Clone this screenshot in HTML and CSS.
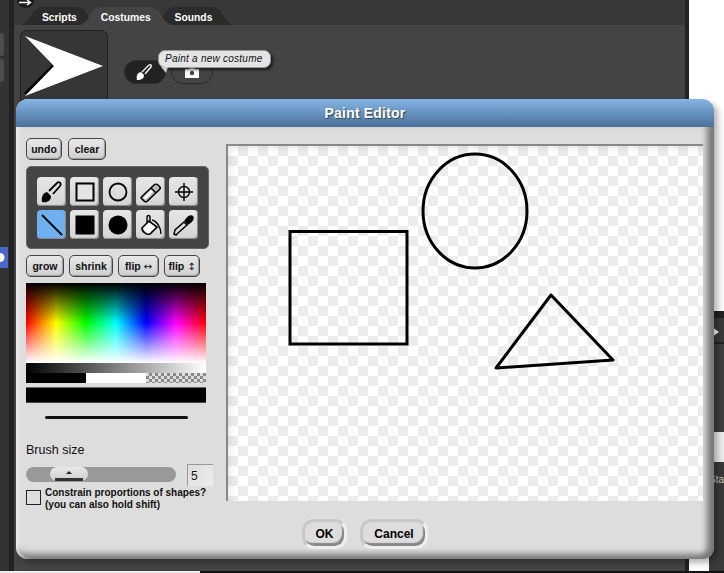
FILE: index.html
```html
<!DOCTYPE html>
<html>
  <head>
    <meta charset="UTF-8" />
    <title>Paint Editor</title>
    <link rel="stylesheet" href="styles.css">
  </head>
  <body>
    <div class="app">
      <div class="sidebar">
        <span class="side-btn"></span>
        <span class="side-btn"></span>
        <span class="side-blue"></span>
      </div>
      <div class="gutter"></div>
      <div class="main">
        <span class="top-arrow">
          <svg width="17" height="8" viewBox="0 0 17 8"><path d="M0 0h17c0 5-4 8-8 8s-9-3-9-8Z" fill="#1c1c1c"/><path d="M2 2.500h11M10 0l3.500 2.500L10 5" fill="none" stroke="#fff" stroke-width="1.3"/></svg>
        </span>
        <div class="tabs">
          <span class="tab">Scripts</span>
          <span class="tab tab-on">Costumes</span>
          <span class="tab">Sounds</span>
        </div>
        <div class="costumes">
          <div class="thumb">
            <svg width="87" height="72" viewBox="0 0 87 72">
              <path d="M32 35 4 63" stroke="#000" stroke-width="3"/>
              <path d="M4 5 82 35 4 65 33 35Z" fill="#fff"/>
            </svg>
          </div>
          <div class="pills">
            <span class="pill pill-on">
              <svg width="18" height="18" viewBox="0 0 18 18"><path d="M1 17c-1-4 0-7 4-8l3 3c0 4-3 5-7 5Z" fill="#fff"/><path d="M6 9 13 2c1.500-1 3 .5 2 2l-6 7" fill="none" stroke="#fff" stroke-width="1.300"/></svg>
            </span>
            <span class="pill">
              <svg width="14" height="12" viewBox="0 0 14 12"><path d="M0 3h4l1-2h4l1 2h4v9H0Z" fill="#fff"/><circle cx="7" cy="7" r="2.200" fill="#444"/></svg>
            </span>
          </div>
        </div>
      </div>
      <div class="edge"></div>
      <div class="far">
        <div class="far-blank"></div>
        <div class="far-sprite">
          <svg width="10" height="15" viewBox="0 0 10 15"><path d="M0 0 10 7 0 14 4 7Z" fill="#fff"/></svg>
        </div>
        <div class="far-light"></div>
        <div class="far-status">Sta</div>
      </div>
    </div>
    <div class="foot"></div>

    <div class="tooltip">Paint a new costume</div>

    <div class="dialog">
      <div class="dialog-title">Paint Editor</div>
      <div class="dialog-body">
        <div class="tools-col">
          <div class="btn-row">
            <button class="btn btn-undo">undo</button>
            <button class="btn btn-clear">clear</button>
          </div>
          <div class="toolbox">
            <span class="tool">
              <svg width="24" height="24" viewBox="0 0 24 24"><path d="M2 22c-1-5 1-9 5-10l4 4c0 5-4 7-9 6Z" fill="#000"/><path d="M9 11 17 3c2-2 5 0 3 3l-7 8" fill="#ddd" stroke="#000" stroke-width="1.800"/></svg>
            </span>
            <span class="tool">
              <svg width="24" height="24" viewBox="0 0 24 24"><rect x="3.500" y="3.500" width="17" height="17" fill="#e4e4e4" stroke="#000" stroke-width="2"/></svg>
            </span>
            <span class="tool">
              <svg width="24" height="24" viewBox="0 0 24 24"><circle cx="12" cy="12" r="8.500" fill="none" stroke="#000" stroke-width="1.800"/></svg>
            </span>
            <span class="tool">
              <svg width="24" height="24" viewBox="0 0 24 24"><path d="M2.500 17 15 5c1-1 3-1 4 0l1.500 1.500c1 1 1 2 0 3L8.500 21c-1 1-2.500 1-3.500 0l-2.500-2.500c-.5-.5-.5-1 0-1.500Z" fill="#bbb" stroke="#000" stroke-width="1.600"/><path d="M4.500 17.500 12.500 9.500l2 2-8 8Z" fill="#fff"/><path d="M12 8l5 5" stroke="#000" stroke-width="1.600"/></svg>
            </span>
            <span class="tool">
              <svg width="24" height="24" viewBox="0 0 24 24"><circle cx="12" cy="12" r="5.500" fill="none" stroke="#000" stroke-width="1.400"/><path d="M12 3v18M3 12h18" stroke="#000" stroke-width="1.400"/></svg>
            </span>
            <span class="tool tool-on">
              <svg width="24" height="24" viewBox="0 0 24 24"><path d="M2 2 22 22" stroke="#000" stroke-width="1.800"/></svg>
            </span>
            <span class="tool">
              <svg width="24" height="24" viewBox="0 0 24 24"><rect x="2.500" y="2.500" width="19" height="19" fill="#000"/></svg>
            </span>
            <span class="tool">
              <svg width="24" height="24" viewBox="0 0 24 24"><circle cx="12" cy="12" r="9.500" fill="#000"/></svg>
            </span>
            <span class="tool">
              <svg width="24" height="24" viewBox="0 0 24 24"><path d="M10 8 3 15c0 4 5 7 8 6l7-7Z" fill="#fff" stroke="#000" stroke-width="1.700"/><path d="M8 10V4c0-2 3-2 3 0v6" fill="none" stroke="#000" stroke-width="1.400"/><path d="M13 7c5 1 9 8 9 14" fill="none" stroke="#000" stroke-width="1.400"/></svg>
            </span>
            <span class="tool">
              <svg width="24" height="24" viewBox="0 0 24 24"><path d="M4 22 2 21l1-4L12 9l3 3-9 8Z" fill="#ddd" stroke="#000" stroke-width="1.500"/><path d="M13 7c2-4 6-6 8-4s0 6-4 8l-1 1-4-4Z" fill="#000"/></svg>
            </span>
          </div>
          <div class="btn-row btn-row-flips">
            <button class="btn btn-grow">grow</button>
            <button class="btn btn-shrink">shrink</button>
            <button class="btn btn-fliph">flip <span class="arrow">↔</span></button>
            <button class="btn btn-flipv">flip <span class="arrow">↕</span></button>
          </div>
          <div class="picker"></div>
          <div class="grays"></div>
          <div class="bw">
            <span class="bw-black"></span>
            <span class="bw-white"></span>
            <span class="bw-clear"></span>
          </div>
          <div class="swatch"></div>
          <div class="preview"><span class="preview-line"></span></div>
          <div class="brush-label">Brush size</div>
          <div class="brush-row">
            <div class="slider"><span class="thumb-knob"></span></div>
            <div class="size-box">5</div>
          </div>
          <div class="constrain">
            <span class="check"></span>
            <span class="constrain-text">Constrain proportions of shapes?<br>(you can also hold shift)</span>
          </div>
        </div>
        <div class="canvas">
          <svg width="475" height="355" viewBox="228 146 475 355">
            <rect x="290" y="231.500" width="117" height="112.500" fill="none" stroke="#000" stroke-width="3"/>
            <ellipse cx="475" cy="211" rx="52" ry="57" fill="none" stroke="#000" stroke-width="3"/>
            <path d="M551 295 613 360 496 368Z" fill="none" stroke="#000" stroke-width="3" stroke-linejoin="round"/>
          </svg>
        </div>
      </div>
      <div class="dialog-foot">
        <button class="round-btn round-ok">OK</button>
        <button class="round-btn round-cancel">Cancel</button>
      </div>
    </div>
  </body>
</html>
```

FILE: styles.css
```css
* {
  box-sizing: border-box;
}
html,
body {
  margin: 0;
  height: 573px;
  overflow: hidden;
  background: #fff;
  font-family: "Liberation Sans", Arial, sans-serif;
}
.app {
  display: flex;
  height: 571px;
}
.sidebar {
  width: 9px;
  background: #333;
  display: flex;
  flex-direction: column;
  padding-top: 33px;
  gap: 3px;
}
.side-btn {
  width: 4px;
  height: 23px;
  background: #4d4d4d;
  border-radius: 0 3px 3px 0;
}
.side-blue {
  width: 8px;
  height: 21px;
  margin-top: 162px;
  background: radial-gradient(circle at 0 50%, #fff 0 4px, #4a68cc 5px);
}
.gutter {
  width: 5px;
  background: #222;
}
.main {
  width: 676px;
  background: #444;
}
.top-arrow {
  display: block;
  width: 17px;
  height: 0;
  margin-left: 3px;
}
.top-arrow svg {
  display: block;
}
.tabs {
  display: flex;
  height: 25px;
  padding: 7px 0 0 8px;
  background: #383838;
}
.tab {
  height: 18px;
  padding: 5px 20px 0;
  margin-right: -16px;
  color: #fff;
  font-size: 10.300px;
  font-weight: bold;
  line-height: 12px;
  background: #2b2b2b;
  clip-path: polygon(0 100%, 6px 75%, 12px 20%, 18px 0, calc(100% - 18px) 0, calc(100% - 12px) 20%, calc(100% - 6px) 75%, 100% 100%);
}
.tab-on {
  position: relative;
  background: #444;
  z-index: 1;
}
.costumes {
  display: flex;
  padding: 5px 6px;
}
.thumb {
  width: 88px;
  height: 80px;
  border: 1px solid #222;
  border-radius: 7px;
  background: #363636;
}
.thumb svg {
  display: block;
}
.pills {
  display: flex;
  gap: 5px;
  padding: 30px 0 0 16px;
}
.pill {
  width: 42px;
  height: 24px;
  border: 1px solid #2a2a2a;
  border-radius: 12px;
  display: flex;
  align-items: center;
  justify-content: center;
}
.pill-on {
  background: #222;
}
.edge {
  width: 4px;
  background: #222;
}
.far {
  flex: 1;
  display: flex;
  flex-direction: column;
  padding-top: 311px;
}
.far-blank {
  height: 7px;
  background: #222;
  margin-left: 20px;
}
.far-sprite {
  height: 114px;
  margin-left: 20px;
  background: linear-gradient(#3a3a3a 24px, #222 24px 26px, #3f3f3f 26px);
  padding-top: 7px;
}
.far-sprite svg {
  display: block;
}
.far-light {
  height: 30px;
  margin-left: 20px;
  background: #eee;
}
.far-status {
  flex: 1;
  margin-left: 20px;
  padding-top: 12px;
  background: #3a3a3a;
  color: #ccc;
  font-size: 10px;
}
.foot {
  height: 2px;
  background: linear-gradient(90deg, #eee 200px, #111 200px);
}
.tooltip {
  position: absolute;
  left: 158px;
  top: 50px;
  width: 113px;
  height: 18px;
  border: 1px solid #999;
  border-radius: 7px;
  background: #e4e4e4;
  box-shadow: 2px 2px 3px rgba(0, 0, 0, 0.6);
  color: #111;
  font-size: 10px;
  font-style: italic;
  letter-spacing: 0.25px;
  line-height: 16px;
  padding-left: 6px;
}
.tooltip::after {
  content: "";
  position: absolute;
  left: 2px;
  top: 16px;
  border-top: 6px solid #ccc;
  border-left: 5px solid transparent;
  border-right: 2px solid transparent;
}
.dialog {
  position: absolute;
  left: 16px;
  top: 99px;
  width: 698px;
  height: 460px;
  border-radius: 12px;
  background: #ddd;
  box-shadow: 4px 4px 6px rgba(0, 0, 0, 0.3);
}
.dialog::before {
  content: "";
  position: absolute;
  inset: 28px 0 0;
  box-shadow: inset 5px 0 4px -3px #f2f2f2, inset -11px 0 6px -4px #777, inset 0 -9px 6px -4px #777;
  border-radius: 0 0 12px 12px;
  pointer-events: none;
}
.dialog-title {
  height: 28px;
  border-radius: 12px 12px 0 0;
  background: linear-gradient(#85b5e6, #4a7099);
  color: #fff;
  font-size: 14px;
  font-weight: bold;
  letter-spacing: 0.2px;
  line-height: 29px;
  text-align: center;
  text-shadow: 1px 1px 1px #345;
}
.dialog-body {
  position: relative;
  display: flex;
  height: 375px;
  padding: 11px 0 0 10px;
}
.tools-col {
  width: 200px;
}
.btn-row {
  display: flex;
  gap: 6px;
}
.btn {
  height: 22px;
  padding: 0;
  border: 1px solid #444;
  border-radius: 5px;
  background: linear-gradient(#e8e8e8, #cfcfcf);
  box-shadow: inset -1px -1px 1px #999;
  color: #111;
  font-family: inherit;
  font-size: 10.500px;
  font-weight: bold;
}
.arrow {
  font-family: "DejaVu Sans", sans-serif;
  font-size: 10px;
  font-weight: normal;
}
.btn-undo {
  width: 36px;
}
.btn-clear {
  width: 38px;
}
.btn-grow {
  width: 38px;
}
.btn-shrink {
  width: 44px;
}
.btn-fliph {
  width: 41px;
}
.btn-flipv {
  width: 36px;
}
.btn-row-flips {
  gap: 5px;
}
.toolbox {
  display: grid;
  grid-template-columns: repeat(5, 29px);
  grid-auto-rows: 29px;
  gap: 4px;
  width: 183px;
  height: 83px;
  margin-top: 6px;
  margin-bottom: 6px;
  padding: 10px 0 0 10px;
  background: #444;
  border: 1px solid #666;
  border-radius: 5px;
}
.tool {
  display: flex;
  align-items: center;
  justify-content: center;
  border-radius: 4px;
  background: linear-gradient(#e6e6e6, #d4d4d4);
  box-shadow: inset -1px -1px 1px #888;
}
.tool-on {
  background: #6eb0f0;
}
.picker {
  width: 180px;
  height: 80px;
  margin-top: 6px;
  background:
    linear-gradient(#000 0%, transparent 50%, transparent 50%, #fff 100%),
    linear-gradient(90deg, #f00, #ff0 16.67%, #0f0 33.33%, #0ff 50%, #00f 66.67%, #f0f 83.33%, #f00);
}
.grays {
  width: 180px;
  height: 10px;
  background: linear-gradient(90deg, #000, #fff);
}
.bw {
  display: flex;
  width: 180px;
  height: 10px;
}
.bw span {
  width: 60px;
}
.bw-black {
  background: #000;
}
.bw-white {
  background: #fff;
}
.bw-clear {
  background: repeating-conic-gradient(#888 0 25%, #ddd 0 50%) 0 0 / 6px 6px;
}
.swatch {
  width: 180px;
  height: 16px;
  margin-top: 4px;
  background: #000;
  border-top: 1px solid #666;
  border-bottom: 1px solid #444;
}
.preview {
  display: flex;
  justify-content: center;
  width: 180px;
  padding-top: 13px;
}
.preview-line {
  width: 143px;
  height: 3px;
  background: #111;
  border-radius: 2px;
}
.brush-label {
  margin-top: 24px;
  color: #111;
  font-size: 12.500px;
}
.brush-row {
  display: flex;
  align-items: center;
  gap: 11px;
  margin-top: 5px;
}
.slider {
  width: 150px;
  height: 15px;
  padding-left: 24px;
  border-radius: 8px;
  background: #999;
}
.thumb-knob {
  position: relative;
  display: block;
  width: 38px;
  height: 14px;
  border-radius: 8px;
  background: linear-gradient(#e8e8e8, #cfcfcf);
}
.thumb-knob::before {
  content: "";
  position: absolute;
  left: 16px;
  top: 4px;
  border-bottom: 3px solid #222;
  border-left: 3px solid transparent;
  border-right: 3px solid transparent;
}
.thumb-knob::after {
  content: "";
  position: absolute;
  left: 5px;
  right: 5px;
  bottom: 0;
  height: 3px;
  background: #333;
}
.size-box {
  width: 26px;
  height: 22px;
  margin-top: 2px;
  padding-left: 3px;
  border-top: 1px solid #999;
  border-left: 1px solid #999;
  background: linear-gradient(135deg, #ddd, #eee);
  color: #111;
  font-size: 12px;
  line-height: 22px;
}
.constrain {
  display: flex;
  gap: 4px;
  margin-top: 1px;
}
.check {
  width: 15px;
  height: 15px;
  margin-top: 3px;
  border: 1px solid #222;
  background: #ddd;
}
.constrain-text {
  color: #111;
  font-size: 10px;
  font-weight: bold;
  line-height: 12px;
}
.canvas {
  width: 477px;
  height: 357px;
  margin-top: 6px;
  border-top: 2px solid #888;
  border-left: 2px solid #888;
  background:
    repeating-conic-gradient(#ececec 0 25%, #fff 0 50%) 0 0 / 20px 20px;
  box-shadow: inset 7px 7px 6px -4px rgba(0, 0, 0, 0.08);
}
.canvas svg {
  display: block;
}
.dialog-foot {
  position: relative;
  display: flex;
  justify-content: flex-start;
  gap: 13px;
  padding: 17px 0 0 286px;
}
.round-btn {
  height: 30px;
  padding: 0;
  border: 3px solid #c8c8c8;
  border-bottom-color: #eee;
  border-right-color: #eee;
  border-radius: 12px;
  background: #ddd;
  box-shadow: inset -2px -3px 1px #888;
  color: #000;
  font-family: inherit;
  font-size: 12px;
  font-weight: bold;
}
.round-ok {
  width: 45px;
}
.round-cancel {
  width: 68px;
}
```
